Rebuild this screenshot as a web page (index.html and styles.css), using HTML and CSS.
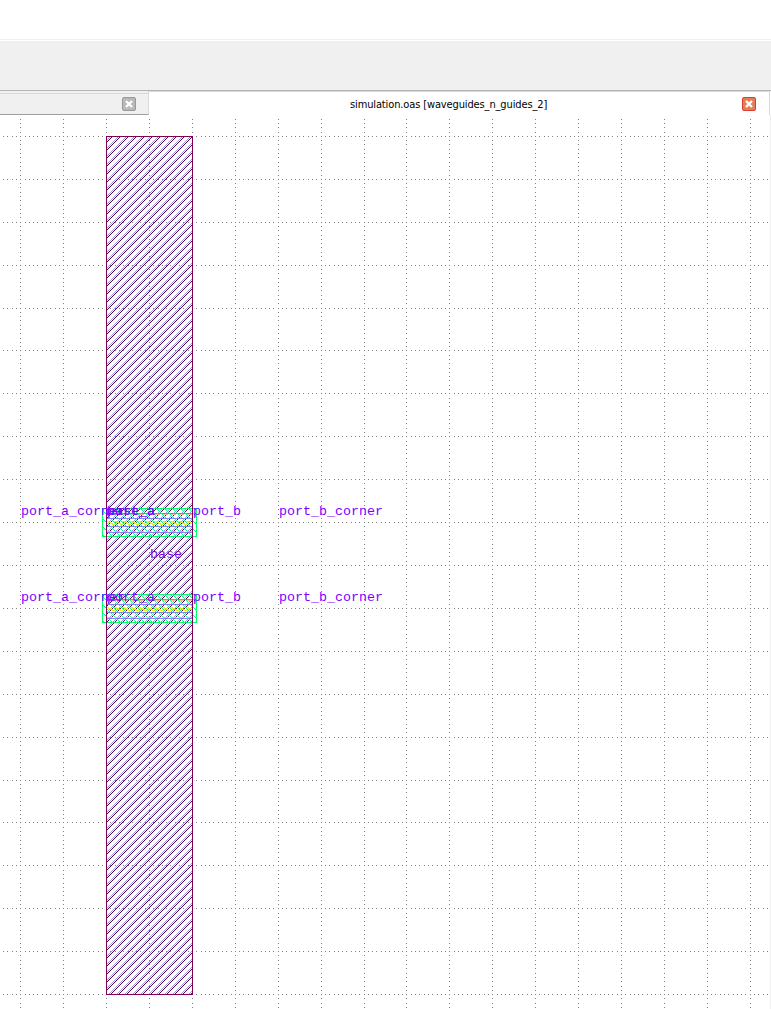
FILE: index.html
```
<!DOCTYPE html>
<html lang="en">
<head>
<meta charset="utf-8">
<title>simulation.oas</title>
<link rel="stylesheet" href="styles.css">
</head>
<body>
<div class="menu-strip"></div>
<div class="toolbar"></div>
<div class="tabs">
  <div class="tab tab-idle">
    <svg class="close" width="14" height="14" viewBox="0 0 14 14"><rect x=".5" y=".5" width="13" height="13" rx="1.5" fill="#b9b9b9" stroke="#999"/><path d="M4 4l6 6M10 4l-6 6" stroke="#fff" stroke-width="2.3"/></svg>
  </div>
  <div class="tab tab-active">
    <span class="title">simulation.oas [waveguides_n_guides_2]</span>
    <svg class="close" width="14" height="14" viewBox="0 0 14 14"><rect x=".5" y=".5" width="13" height="13" rx="1.5" fill="#e18058" stroke="#dc3f32"/><path d="M4 4l6 6M10 4l-6 6" stroke="#fff" stroke-width="2.3"/></svg>
  </div>
</div>
<div class="view">
<svg class="layout" width="770" height="894" viewBox="0 115 770 894" shape-rendering="crispEdges">
  <defs>
    <pattern id="hatch" width="8" height="8" patternUnits="userSpaceOnUse">
      <path fill="#5c0040" d="M0 0h1v1h-1zM1 7h1v1h-1zM2 6h1v1h-1zM3 5h1v1h-1zM4 4h1v1h-1zM5 3h1v1h-1zM6 2h1v1h-1zM7 1h1v1h-1z"/>
      <path fill="#9a9ef0" d="M0 6h1v1h-1zM1 5h1v1h-1zM2 4h1v1h-1zM3 3h1v1h-1zM4 2h1v1h-1zM5 1h1v1h-1zM6 0h1v1h-1zM7 7h1v1h-1z"/>
    </pattern>
    <pattern id="port" width="8" height="8" patternUnits="userSpaceOnUse">
      <path fill="#00ff80" d="M0 0h1v1h-1zM1 1h1v1h-1zM2 2h1v1h-1zM3 3h1v1h-1zM4 4h1v1h-1zM5 5h1v1h-1zM6 6h1v1h-1zM7 7h1v1h-1z"/>
    </pattern>
    <pattern id="core" width="8" height="4" patternUnits="userSpaceOnUse">
      <path fill="#dfff00" d="M0 0h3v1h-3zM2 1h3v1h-3zM4 2h3v1h-3zM6 3h2v1h-2zM0 3h1v1h-1z"/>
    </pattern>
    <g id="guide">
      <rect x="102.5" y="508.5" width="94" height="28" fill="url(#port)" stroke="#00ff60"/>
      <path d="M107 514.5h85M107 531.5h85" stroke="#ffbf80" stroke-dasharray="5 3"/>
      <path d="M107 513.5h85M107 518.5h85M107 526.5h85M107 532.5h85" stroke="#8086ff"/>
      <rect x="107" y="521" width="85" height="4" fill="url(#core)"/>
    </g>
  </defs>
  <path id="grid" fill="#808080"/>
  <rect x="106.5" y="136.5" width="86" height="858" fill="url(#hatch)" stroke="#800057"/>
  <use href="#guide"/>
  <use href="#guide" y="86"/>
  <path d="M107 508h85v29h-85zM107 594h85v29h-85z" fill="url(#hatch)" opacity=".2"/>
  <path d="M106.5 508v29M192.5 508v29M106.5 594v29M192.5 594v29" stroke="#800057"/>
  <g class="labels">
    <text x="21" y="515">port_a_corner</text><text x="107" y="515">base_a</text><text x="107" y="515">port_a</text><text x="193" y="515">port_b</text><text x="279" y="515">port_b_corner</text>
    <text x="150" y="558">base</text>
    <text x="21" y="601">port_a_corner</text><text x="107" y="601">port_a</text><text x="193" y="601">port_b</text><text x="279" y="601">port_b_corner</text>
  </g>
</svg>
</div>
<script src="grid.js"></script>
</body>
</html>
```

FILE: styles.css
```
body { margin: 0; width: 771px; height: 1009px; overflow: hidden; background: #fff; display: flex; flex-direction: column; }
.menu-strip { box-sizing: border-box; height: 41px; flex: none; border-bottom: 1px solid #fff; background: linear-gradient(#fff 39px, #f0f0f0 39px); }
.toolbar { box-sizing: border-box; height: 50px; flex: none; background: #f0f0f0; border-bottom: 1px solid #b4b4b4; }
.tabs { display: flex; height: 24px; flex: none; }
.tab { box-sizing: border-box; display: flex; align-items: center; }
.tab-idle { width: 149px; justify-content: flex-end; padding-right: 12px; border-right: 1px solid #d9d9d9; border-bottom: 1px solid #a0a0a0; background: linear-gradient(#f0f0f0 2px, #d9d9d9 2px, #d9d9d9 3px, #f0f0f0 3px); padding-top: 3px; }
.tab-active { width: 621px; border-top: 1px solid #d9d9d9; border-right: 1px solid #d9d9d9; padding-right: 13px; }
.title { flex: 1; padding-left: 201px; font: 11px/14px "DejaVu Sans Condensed", "DejaVu Sans", sans-serif; font-stretch: condensed; letter-spacing: -.13px; white-space: nowrap; color: #000; padding-top: 2px; }
.close { flex: none; }
.view { flex: none; width: 770px; height: 894px; border-right: 1px solid #f0f0f0; }
.layout { display: block; }
.labels { font: 13.33px "Liberation Mono", monospace; fill: #8000ff; }
```

FILE: grid.js
```
// Dotted grid: ten dots per cell in each direction.
const cell = 42.91, step = cell / 10, originX = 106.1, originY = 135.9;
let dots = "";
const dot = (x, y) => { dots += `M${x} ${y}h1v1h-1z`; };
for (let i = -2; i <= 15; i++) {
  const x = Math.round(originX + i * cell);
  for (let j = -4; j <= 203; j++) dot(x, Math.round(originY + j * step));
}
for (let j = 0; j <= 20; j++) {
  const y = Math.round(originY + j * cell);
  for (let i = -24; i <= 154; i++) dot(Math.round(originX + i * step), y);
}
document.getElementById("grid").setAttribute("d", dots);
```
